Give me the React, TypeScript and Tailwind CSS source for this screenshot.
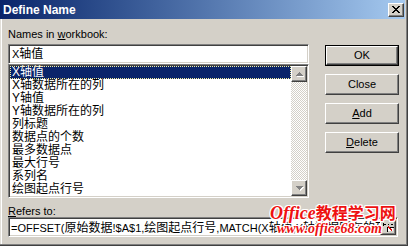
import React from 'react';

const raised =
  'border border-t-white border-l-white border-r-[#404040] border-b-[#404040] shadow-[inset_-1px_-1px_#808080]';
const sunken =
  'border border-t-[#808080] border-l-[#808080] border-r-white border-b-white shadow-[inset_1px_1px_#404040,inset_-1px_-1px_#d4d0c8]';

const names = [
  'X轴值',
  'X轴数据所在的列',
  'Y轴值',
  'Y轴数据所在的列',
  '列标题',
  '数据点的个数',
  '最多数据点',
  '最大行号',
  '系列名',
  '绘图起点行号',
];

// latin runs in 11px, CJK runs in 12px like the old dialog fonts
function Mixed({ text }: { text: string }) {
  const parts = text.match(/[\u4e00-\u9fff]+|[^\u4e00-\u9fff]+/g) || [];
  return (
    <>
      {parts.map((p, i) =>
        /[\u4e00-\u9fff]/.test(p) ? (
          <span key={i} className="text-[12px]">{p}</span>
        ) : (
          <span key={i} className="text-[11px]">{p}</span>
        )
      )}
    </>
  );
}

function Arrow({ up }: { up?: boolean }) {
  return (
    <svg width="9" height="6" viewBox="0 0 9 6" shapeRendering="crispEdges">
      <polygon points={up ? '4.5,1 8,5 1,5' : '1,1 8,1 4.5,5'} fill="#ffffff" transform="translate(1,1)" />
      <polygon points={up ? '4.5,1 8,5 1,5' : '1,1 8,1 4.5,5'} fill="#808080" />
    </svg>
  );
}

function Btn({ children, isDefault }: { children: React.ReactNode; isDefault?: boolean }) {
  const inner = (
    <div className={`${raised} flex-1 flex items-center justify-center bg-[#d4d0c8] text-[11px] text-black`}>
      {children}
    </div>
  );
  return isDefault ? (
    <div className="w-[74px] h-[21px] border border-black flex">{inner}</div>
  ) : (
    <div className="w-[74px] h-[21px] flex">{inner}</div>
  );
}

export default function App() {
  return (
    <div className="relative w-[408px] h-[246px] overflow-hidden bg-[#d4d0c8] border-r border-b border-[#404040] font-['Liberation_Sans','Noto_Sans_CJK_SC',sans-serif] text-black">
      <div className="h-full flex flex-col border-r border-b border-[#808080] pr-px">
        {/* Title bar */}
        <div className="h-[19px] shrink-0 flex items-center justify-between pl-[3px] pr-[1px] bg-gradient-to-r from-[#0a246a] to-[#a6caf0]">
          <span className="text-[12px] font-bold text-white leading-none">Define Name</span>
          <div className={`${raised} w-[16px] h-[14px] bg-[#d4d0c8] flex items-center justify-center`}>
            <svg width="8" height="7" viewBox="0 0 8 7" shapeRendering="crispEdges">
              <rect x="0" y="0" width="2" height="1" />
              <rect x="6" y="0" width="2" height="1" />
              <rect x="1" y="1" width="2" height="1" />
              <rect x="5" y="1" width="2" height="1" />
              <rect x="2" y="2" width="4" height="1" />
              <rect x="3" y="3" width="2" height="1" />
              <rect x="2" y="4" width="4" height="1" />
              <rect x="1" y="5" width="2" height="1" />
              <rect x="5" y="5" width="2" height="1" />
              <rect x="0" y="6" width="2" height="1" />
              <rect x="6" y="6" width="2" height="1" />
            </svg>
          </div>
        </div>

        {/* Body */}
        <div className="flex-1 flex flex-col pl-[8px] pr-[6px] pt-[9px] shadow-[inset_1px_0_#e2dfd9,inset_2px_0_#ffffff]">
          <div className="flex gap-[16px]">
            <div className="w-[302px] flex flex-col">
              <div className="h-[13px] text-[11px] leading-[13px]">
                Names in <span className="underline underline-offset-1">w</span>orkbook:
              </div>
              <div className={`${sunken} mt-[3px] h-[20px] bg-white flex items-center pl-[3px] leading-none`}>
                <Mixed text="X轴值" />
              </div>
              <div className={`${sunken} h-[134px] bg-white p-px flex`}>
                <div className="flex-1 flex flex-col">
                  {names.map((n, i) => (
                    <div
                      key={n}
                      className={`h-[13px] leading-[13px] text-[12px] pl-[2px] whitespace-nowrap ${
                        i === 0
                          ? 'bg-[#0a246a] text-white outline outline-1 outline-dotted outline-[#f4f0a0] -outline-offset-1'
                          : ''
                      }`}
                    >
                      {n}
                    </div>
                  ))}
                </div>
                <div className="w-[16px] flex flex-col">
                  <div className={`${raised} h-[16px] bg-[#d4d0c8] flex items-center justify-center`}>
                    <Arrow up />
                  </div>
                  <div className="flex-1 bg-[repeating-conic-gradient(#d4d0c8_0%_25%,#ffffff_0%_50%)] bg-[length:2px_2px]" />
                  <div className={`${raised} h-[16px] bg-[#d4d0c8] flex items-center justify-center`}>
                    <Arrow />
                  </div>
                </div>
              </div>
            </div>

            <div className="flex flex-col gap-[8px] pt-[17px]">
              <Btn isDefault>OK</Btn>
              <Btn>Close</Btn>
              <Btn>
                <span className="underline underline-offset-1">A</span>dd
              </Btn>
              <Btn>
                <span className="underline underline-offset-1">D</span>elete
              </Btn>
            </div>
          </div>

          <div className="mt-[7px] h-[12px] text-[11px] leading-[12px]">
            <span className="underline underline-offset-1">R</span>efers to:
          </div>
          <div className={`${sunken} w-[390px] h-[20px] bg-white p-px flex items-center`}>
            <div className="flex-1 overflow-hidden whitespace-nowrap pl-[1px] leading-none">
              <Mixed text="=OFFSET(原始数据!$A$1,绘图起点行号,MATCH(X轴值,X轴数据所在的列,0)-1,0,数据点的个数,1)" />
            </div>
            <div className={`${raised} w-[16px] h-[16px] bg-[#d4d0c8] flex items-center justify-center`}>
              <svg width="11" height="10" viewBox="0 0 11 10" shapeRendering="crispEdges">
                <rect x="0" y="1" width="1" height="3" fill="#000" />
                <rect x="1" y="2" width="2" height="1" fill="#000" />
                <rect x="5" y="2" width="1" height="1" fill="#000" />
                <rect x="8" y="2" width="2" height="1" fill="#000" />
                <rect x="4" y="5" width="7" height="5" fill="none" stroke="#000" strokeWidth="1" />
                <rect x="5" y="6" width="5" height="3" fill="#fff" />
                <polygon points="5,4 9,8 8,9 4,5" fill="#e01010" />
              </svg>
            </div>
          </div>
        </div>
      </div>

      {/* watermark overlay */}
      <div className="absolute left-[270px] top-[204px] flex items-baseline leading-none text-[#ee1111] font-bold [text-shadow:1px_0_#fff,-1px_0_#fff,0_1px_#fff,0_-1px_#fff,1px_1px_#fff,-1px_-1px_#fff,1px_-1px_#fff,-1px_1px_#fff]">
        <span className="font-['Liberation_Serif',serif] italic text-[18px]">Office</span>
        <span className="font-['Noto_Sans_CJK_SC',sans-serif] text-[16px]">教程学习网</span>
      </div>
      <div className="absolute left-[277px] top-[222px] leading-none text-[#ee1111] font-bold italic font-['Liberation_Serif',serif] text-[14px] [text-shadow:1px_0_#fff,-1px_0_#fff,0_1px_#fff,0_-1px_#fff,1px_1px_#fff,-1px_-1px_#fff,1px_-1px_#fff,-1px_1px_#fff]">
        www.office68.com
      </div>
    </div>
  );
}
